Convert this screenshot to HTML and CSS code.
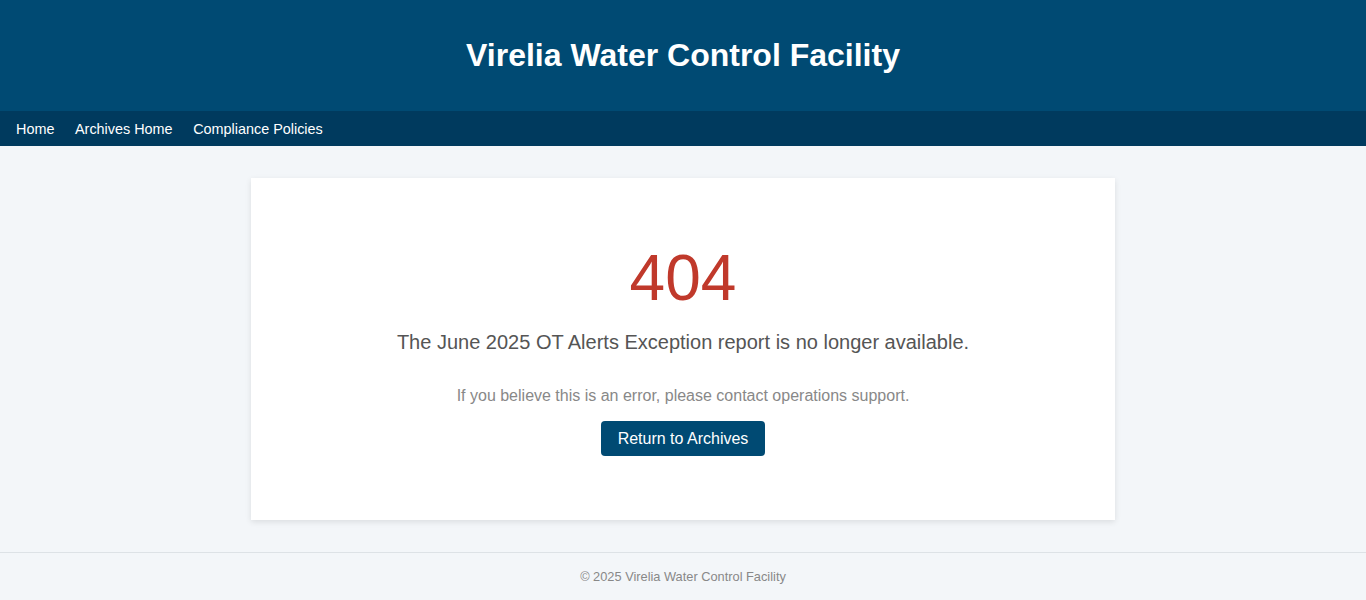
FILE: index.html
```html
<!DOCTYPE html>
<html lang="en">
<head>
<meta charset="utf-8">
<title>Virelia Water Control Facility</title>
<link rel="stylesheet" href="styles.css">
</head>
<body>
<header class="site-header">
  <h1 class="site-title">Virelia Water Control Facility</h1>
</header>
<nav class="site-nav">
  <a href="#">Home</a>
  <a href="#">Archives Home</a>
  <a href="#">Compliance Policies</a>
</nav>
<main class="main">
  <section class="card">
    <div class="code">404</div>
    <p class="message">The June 2025 OT Alerts Exception report is no longer available.</p>
    <p class="hint">If you believe this is an error, please contact operations support.</p>
    <a class="btn" href="#">Return to Archives</a>
  </section>
</main>
<footer class="site-footer">© 2025 Virelia Water Control Facility</footer>
</body>
</html>
```
FILE: styles.css
```css
* { box-sizing: border-box; }
html, body { margin: 0; padding: 0; }
body {
  font-family: "Liberation Sans", Arial, sans-serif;
  background: #f3f6f9;
  color: #333;
}
.site-header {
  background: #004a73;
  height: 111px;
  display: flex;
  align-items: center;
  justify-content: center;
}
.site-title {
  margin: 0;
  color: #fff;
  font-size: 32px;
  font-weight: bold;
}
.site-nav {
  background: #003a5e;
  height: 35px;
  display: flex;
  align-items: center;
  padding: 0 16px;
  gap: 20.6px;
}
.site-nav a {
  color: #fff;
  text-decoration: none;
  font-size: 14.4px;
}
.main {
  padding: 32px 0;
  display: flex;
  justify-content: center;
}
.card {
  width: 864px;
  height: 342px;
  background: #fff;
  box-shadow: 0 2px 6px rgba(0,0,0,0.1);
  display: flex;
  flex-direction: column;
  align-items: center;
  padding-top: 60px;
}
.code {
  color: #c0392b;
  font-size: 64px;
  line-height: 80px;
}
.message {
  margin: 13px 0 0;
  font-size: 20px;
  color: #555;
}
.hint {
  margin: 33px 0 0;
  font-size: 16px;
  color: #888;
}
.btn {
  margin-top: 16px;
  background: #004a73;
  color: #fff;
  text-decoration: none;
  font-size: 16px;
  padding: 8px 17px;
  border-radius: 4px;
  line-height: 19px;
}
.site-footer {
  border-top: 1px solid #dde2e6;
  text-align: center;
  font-size: 12.8px;
  color: #888;
  padding: 16px 0;
  line-height: 15px;
}
```
